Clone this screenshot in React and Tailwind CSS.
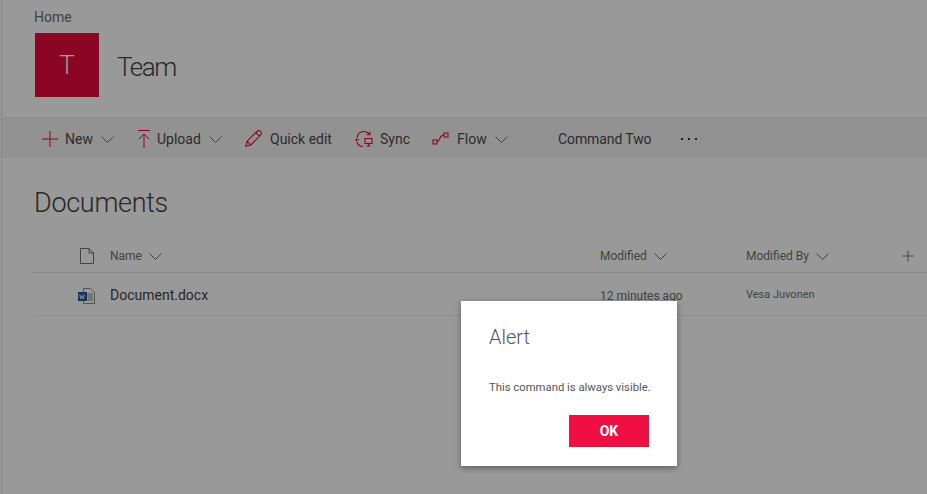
import { Plus } from 'lucide-react';

function Chevron({ className }) {
  return (
    <svg width="13" height="7" viewBox="0 0 13 7" fill="none" stroke="currentColor" strokeWidth="1" className={className}>
      <path d="M.5.500l6 6 6-6" />
    </svg>
  );
}

function PlusIcon() {
  return (
    <svg width="16" height="16" viewBox="0 0 16 16" fill="none" stroke="#e80b3f" strokeWidth="1" className="ml-px">
      <path d="M8 0v16M0 8h16" />
    </svg>
  );
}

function UploadIcon() {
  return (
    <svg width="12" height="18" viewBox="0 0 12 18" fill="none" stroke="#e80b3f" strokeWidth="1">
      <path d="M0 .5h12M6 18V4M1 9l5-5 5 5" />
    </svg>
  );
}

function PencilIcon() {
  return (
    <svg width="17" height="17" viewBox="0 0 17 17" fill="none" stroke="#e80b3f" strokeWidth="1.1">
      <path d="M.8 16.2l1.3-5L12.4 1c.8-.7 1.9-.7 2.700.1l.8.8c.8.8.8 1.900.1 2.700L5.800 14.900zM2.100 11.200l3.700 3.700M10.900 2.500l3.600 3.600" />
    </svg>
  );
}

function SyncIcon() {
  return (
    <svg width="18" height="18" viewBox="0 0 18 18" fill="none" stroke="#e80b3f" strokeWidth="1.1">
      <path d="M2 8C2.500 4 5.200 1.500 8.500 1.500c2.500 0 4.500 1 6 3M15 1.500v3.200h-3.200" />
      <path d="M.5 9.500h3.500M.5 9.500l1.500 1.500M1.800 12c1 2.800 3.400 4.500 6.200 4.500" />
      <rect x="10" y="8.500" width="7" height="5" />
      <path d="M13.500 13.500v2M11.500 16h4" />
    </svg>
  );
}

function FlowIcon() {
  return (
    <svg width="17" height="14" viewBox="0 0 17 14" fill="none" stroke="#e80b3f" strokeWidth="1.1">
      <rect x="1" y="8" width="4" height="4" />
      <rect x="12" y="1" width="4" height="4" />
      <path d="M5 9.500c2 0 2-1.500 3-3.500s1.500-3 4-3" />
    </svg>
  );
}

function WordIcon() {
  return (
    <svg width="17" height="16" viewBox="0 0 17 16">
      <path d="M5.500.5h7l4 4v11h-11z" fill="#fff" stroke="#8a8a8a" />
      <path d="M9.500 6h5.500M9.500 8h5.500M9.500 10h5.500M9.500 12h5.500" stroke="#8a8a8a" />
      <rect x="0" y="4" width="9" height="9" fill="#2b579a" />
      <path d="M1.700 6l1 5 1.300-3.500 1.300 3.500 1-5" fill="none" stroke="#fff" strokeWidth=".8" />
    </svg>
  );
}

function DocIcon() {
  return (
    <svg width="14" height="16" viewBox="0 0 14 16" fill="none" stroke="#707070">
      <path d="M.5.500h8.500l4.500 4.500v10.500H.5zM9 .5v4.500h4.500" />
    </svg>
  );
}

function Dots() {
  return (
    <svg width="16" height="4" viewBox="0 0 16 4" fill="#333">
      <rect x="0" y="1" width="2" height="2" />
      <rect x="7" y="1" width="2" height="2" />
      <rect x="14" y="1" width="2" height="2" />
    </svg>
  );
}

function Command({ icon, label, chevron, width, slot = 'w-[24px]' }) {
  return (
    <div className={`flex items-center ${width}`}>
      <span className={`flex pr-[7px] ${slot}`}>{icon}</span>
      <span className="mt-px text-[14px] text-[#4a4a4a]">{label}</span>
      {chevron && <Chevron className="mt-px ml-[8px] text-[#707070]" />}
    </div>
  );
}

export default function App() {
  return (
    <div className="relative h-[494px] w-[927px] overflow-hidden bg-white font-['Roboto',sans-serif]">
      <div className="ml-px h-full border-l border-[#e1e1e1]">
        {/* Site header */}
        <div className="h-[118px] border-b border-[#eaeaea] pl-[33px] pt-[9px]">
          <div className="-ml-px text-[14px] leading-[17px] text-[#707070]">Home</div>
          <div className="mt-[7px] flex items-center">
            <div className="flex h-[64px] w-[64px] items-center justify-center bg-[#e80b3f] text-[26px] font-light text-white">T</div>
            <div className="ml-[18px] mt-[5px] text-[26px] font-light tracking-[-1.5px] text-[#444]">Team</div>
          </div>
        </div>

        {/* Command bar */}
        <div className="flex h-[40px] items-center bg-[#f4f4f4] pl-[39px] pt-px">
          <Command width="w-[95px]" icon={<PlusIcon />} label="New" chevron />
          <Command width="w-[109px]" slot="w-[21px] pl-[2px]" icon={<UploadIcon />} label="Upload" chevron />
          <Command width="w-[110px]" slot="w-[25px]" icon={<PencilIcon />} label="Quick edit" />
          <Command width="w-[77px]" slot="w-[25px]" icon={<SyncIcon />} label="Sync" />
          <Command width="w-[126px]" slot="w-[25px]" icon={<FlowIcon />} label="Flow" chevron />
          <span className="mt-px w-[123px] text-[14px] tracking-[-0.1px] text-[#4a4a4a]">Command Two</span>
          <Dots />
        </div>

        <div className="pl-[31px]">
          <h1 className="mt-[25px] pl-px text-[27px] leading-[40px] font-light tracking-[-0.3px] text-[#444]">Documents</h1>

          {/* Document list */}
          <div className="mt-[17px] flex h-[33px] items-center border-b border-[#e1e1e1] text-[12px] text-[#707070]">
            <span className="ml-[46px] flex w-[16px] justify-center"><DocIcon /></span>
            <div className="ml-[15px] flex w-[490px] items-center">
              <span>Name</span>
              <Chevron className="ml-[7px]" />
            </div>
            <div className="flex w-[146px] items-center">
              <span>Modified</span>
              <Chevron className="ml-[7px]" />
            </div>
            <div className="flex w-[153px] items-center">
              <span>Modified By</span>
              <Chevron className="ml-[7px]" />
            </div>
            <Plus size={18} strokeWidth={1} color="#555" />
          </div>
          <div className="flex h-[43px] items-center border-b border-[#eaeaea] pt-[3px]">
            <span className="ml-[45px] flex w-[17px] justify-center"><WordIcon /></span>
            <span className="ml-[15px] w-[490px] text-[14px] text-[#444]">Document.docx</span>
            <span className="w-[146px] text-[12px] text-[#707070]">12 minutes ago</span>
            <span className="text-[11px] text-[#707070]">Vesa Juvonen</span>
          </div>
        </div>
      </div>

      {/* Modal overlay */}
      <div className="absolute inset-0 bg-black/40" />
      <div className="absolute top-[301px] left-[461px] h-[165px] w-[216px] bg-white pt-[21px] pl-[28px] shadow-[0_2px_6px_rgba(0,0,0,0.4)]">
        <h2 className="text-[20px] leading-[30px] font-light text-[#555]">Alert</h2>
        <p className="mt-[28px] text-[11.3px] leading-[16px] text-[#555]">This command is always visible.</p>
        <div className="mt-[19px] flex w-[160px] justify-end">
          <button className="h-[32px] w-[80px] bg-[#f00f42] text-[14px] font-bold text-white">OK</button>
        </div>
      </div>
    </div>
  );
}
